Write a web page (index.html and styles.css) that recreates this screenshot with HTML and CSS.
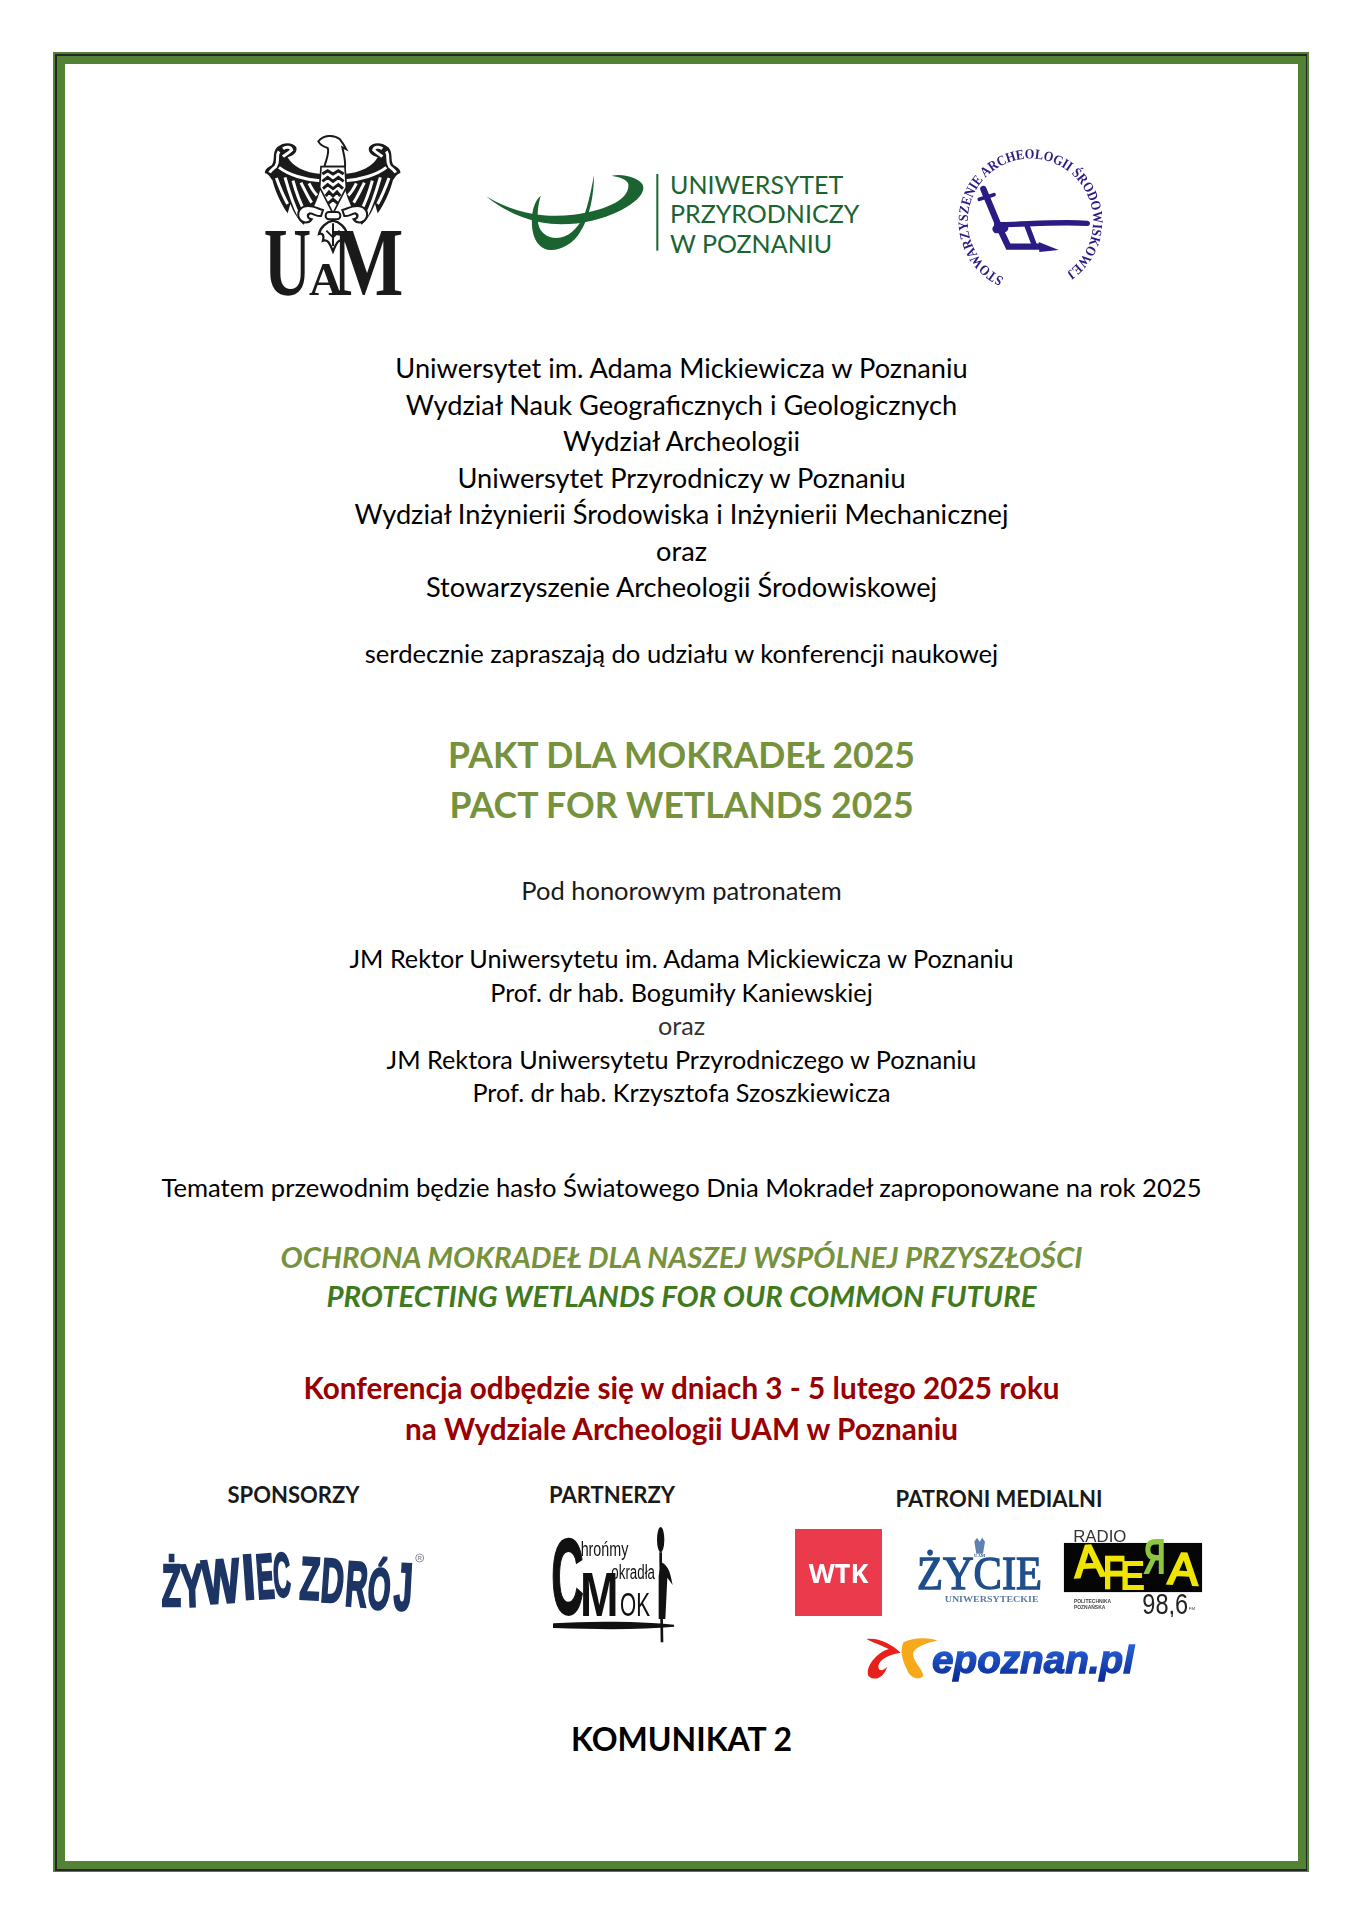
FILE: index.html
```html
<!DOCTYPE html>
<html lang="pl">
<head>
<meta charset="utf-8">
<title>Pakt dla mokradeł 2025</title>
<link rel="stylesheet" href="styles.css">
</head>
<body>
<div class="frame-outer"><div class="frame-mid"><main class="sheet">

<header class="logos">
  <svg class="logo-uam" viewBox="0 0 480 540" aria-label="UAM">
    <g id="wing">
      <path d="M198 150C150 148 110 125 98 100C115 95 128 85 124 70C112 52 82 55 66 70C50 88 62 108 50 124C38 130 28 138 30 148C42 150 44 160 52 168C60 200 78 240 98 268L106 240C118 270 132 290 146 302C168 270 186 235 198 190Z" fill="#1a1a1a"/>
      <g fill="none" stroke="#fff" stroke-width="9">
        <path d="M72 82C62 96 74 110 62 128C52 136 46 142 44 146"/>
        <path d="M84 74C95 66 108 70 110 78C100 88 90 92 84 98"/>
        <path d="M72 130C100 152 150 168 196 170"/>
        <path d="M64 162C76 195 88 222 98 240"/>
        <path d="M90 160C100 195 114 240 132 276"/>
        <path d="M114 170C122 200 134 235 150 264"/>
        <path d="M138 176C148 196 158 218 170 236"/>
        <path d="M162 178C168 190 174 202 186 214"/>
      </g>
      <path d="M160 246C138 246 124 262 132 282C142 300 162 298 170 286C158 284 154 272 164 268C178 270 186 278 198 276L204 258C190 254 176 246 160 246Z" fill="#fff" stroke="#1a1a1a" stroke-width="6"/>
    </g>
    <use href="#wing" transform="translate(466,0) scale(-1,1)"/>
    <path d="M190 52C205 34 235 30 255 46C264 58 270 68 274 76L262 70C266 90 272 106 270 128L208 128C214 106 224 86 218 72C205 68 195 62 190 52Z" fill="#fff" stroke="#1a1a1a" stroke-width="6"/>
    <path d="M198 128H270L274 190L234 268L194 190Z" fill="#fff" stroke="#1a1a1a" stroke-width="5"/>
    <path d="M202 150L218 140L234 150L250 140L266 150M202 172L218 160L234 172L250 160L266 172M204 194L218 182L234 194L250 182L264 194M212 216L222 204L234 216L246 204L256 216M220 238L234 226L248 238" fill="none" stroke="#1a1a1a" stroke-width="9"/>
    <rect x="212" y="264" width="44" height="22" rx="10" fill="#fff" stroke="#1a1a1a" stroke-width="6"/>
    <path d="M234 290C214 294 196 310 192 330C204 326 208 336 204 350C216 346 222 352 234 382C246 352 252 346 264 350C260 336 264 326 276 330C272 310 254 294 234 290Z" fill="#fff" stroke="#1a1a1a" stroke-width="7"/>
    <path d="M234 298V366M214 320L234 340L254 320" fill="none" stroke="#1a1a1a" stroke-width="6"/>
    <text class="uam-big" transform="translate(26,513) scale(.68,1)">U</text>
    <text class="uam-small" transform="translate(162,513)">A</text>
    <text class="uam-big" transform="translate(232,513) scale(.78,1)">M</text>
  </svg>

  <div class="uwp">
    <svg class="logo-uwp" viewBox="0 0 570 300" aria-hidden="true">
      <path d="M18 97C90 140 180 165 280 152C370 140 450 110 445 60C440 45 420 40 395 35C430 28 470 40 487 60C500 85 470 115 420 140C350 175 260 190 180 175C110 160 60 130 18 97Z" fill="#1b6431"/>
      <path d="M342 33C342 90 330 160 300 205C280 240 240 260 210 258C170 255 150 210 157 150C160 125 170 105 182 95C175 120 170 150 175 180C180 205 200 222 230 222C265 222 290 195 310 160C325 125 335 70 342 33Z" fill="#1b6431"/>
      <rect x="529" y="30" width="6" height="230" fill="#1b6431"/>
    </svg>
    <div class="uwp-name">UNIWERSYTET<br>PRZYRODNICZY<br>W POZNANIU</div>
  </div>

  <svg class="logo-sas" viewBox="0 0 510 495" aria-label="Stowarzyszenie Archeologii Środowiskowej">
    <defs><path id="sas-arc" d="M192 432A188 188 0 1 1 366 424"/></defs>
    <text class="sas-text"><textPath href="#sas-arc" textLength="985" lengthAdjust="spacingAndGlyphs">STOWARZYSZENIE ARCHEOLOGII ŚRODOWISKOWEJ</textPath></text>
    <g fill="none" stroke="#2a1c84" stroke-linecap="round">
      <path d="M130 165L180 285L205 338H300" stroke-width="19"/>
      <path d="M118 196L162 182" stroke-width="11"/>
      <path d="M170 272C250 272 350 262 442 268" stroke-width="16"/>
      <path d="M262 278L284 336" stroke-width="16"/>
      <path d="M170 285L192 282" stroke-width="26"/>
    </g>
    <path d="M296 324L356 348L298 354Z" fill="#2a1c84"/>
  </svg>
</header>

<section class="org">
  <p>Uniwersytet im. Adama Mickiewicza w Poznaniu</p>
  <p>Wydział Nauk Geograficznych i Geologicznych</p>
  <p>Wydział Archeologii</p>
  <p>Uniwersytet Przyrodniczy w Poznaniu</p>
  <p>Wydział Inżynierii Środowiska i Inżynierii Mechanicznej</p>
  <p>oraz</p>
  <p>Stowarzyszenie Archeologii Środowiskowej</p>
</section>

<p class="invite">serdecznie zapraszają do udziału w konferencji naukowej</p>

<h1 class="title">PAKT DLA MOKRADEŁ 2025<br>PACT FOR WETLANDS 2025</h1>

<p class="under">Pod honorowym patronatem</p>

<section class="patrons">
  <p>JM Rektor Uniwersytetu im. Adama Mickiewicza w Poznaniu</p>
  <p>Prof. dr hab. Bogumiły Kaniewskiej</p>
  <p class="patrons-and">oraz</p>
  <p>JM Rektora Uniwersytetu Przyrodniczego w Poznaniu</p>
  <p>Prof. dr hab. Krzysztofa Szoszkiewicza</p>
</section>

<p class="theme-intro">Tematem przewodnim będzie hasło Światowego Dnia Mokradeł zaproponowane na rok 2025</p>

<section class="theme">
  <p class="theme-pl">OCHRONA MOKRADEŁ DLA NASZEJ WSPÓLNEJ PRZYSZŁOŚCI</p>
  <p class="theme-en">PROTECTING WETLANDS FOR OUR COMMON FUTURE</p>
</section>

<p class="dates">Konferencja odbędzie się w dniach 3 - 5 lutego 2025 roku<br>na Wydziale Archeologii UAM w Poznaniu</p>

<section class="supporters">
  <div class="col">
    <h2 class="col-head">SPONSORZY</h2>
    <svg class="logo-zywiec" viewBox="0 0 870 240" aria-label="Żywiec Zdrój">
      <g class="zywiec-text">
        <text transform="translate(38,186) scale(.5,.95)">Ż</text>
        <text transform="translate(96,188) rotate(-2) scale(.55,.95)">Y</text>
        <text transform="translate(164,180) rotate(-4) scale(.63,.98)">W</text>
        <text transform="translate(284,166) rotate(-4) scale(.72,1)">I</text>
        <text transform="translate(326,164) rotate(-4) scale(.42,1)">E</text>
        <text transform="translate(376,158) rotate(-3) scale(.38,.98)">C</text>
        <text transform="translate(450,164) rotate(3) scale(.52,.95)">Z</text>
        <text transform="translate(512,172) rotate(4) scale(.5,.98)">D</text>
        <text transform="translate(586,184) rotate(4) scale(.48,1)">R</text>
        <text transform="translate(652,192) rotate(5) scale(.46,.92)">Ó</text>
        <text transform="translate(732,196) rotate(3) scale(.52,1.05)">J</text>
      </g>
      <circle cx="812" cy="42" r="12" fill="none" stroke="#8b8f97" stroke-width="3"/>
      <text class="zywiec-r" x="812" y="49" text-anchor="middle">R</text>
    </svg>
  </div>
  <div class="col">
    <h2 class="col-head">PARTNERZY</h2>
    <svg class="logo-mok" viewBox="0 0 435 390" aria-label="Chrońmy Mokradła MOK">
      <text class="mok-c" transform="translate(34,285) scale(.42,1)">C</text>
      <text class="mok-m" transform="translate(120,290) scale(.73,1)">M</text>
      <text class="mok-ok" x="240" y="290" textLength="90" lengthAdjust="spacingAndGlyphs">OK</text>
      <text class="mok-small" x="122" y="112" textLength="143" lengthAdjust="spacingAndGlyphs">hrońmy</text>
      <text class="mok-small" x="214" y="180" textLength="131" lengthAdjust="spacingAndGlyphs">okradła</text>
      <ellipse cx="362" cy="62" rx="11" ry="38" fill="#111"/>
      <path d="M362 100V125L366 370" fill="none" stroke="#111" stroke-width="8"/>
      <path d="M364 130C388 140 392 170 398 198L382 176L376 300H356V170Z" fill="#111"/>
      <path d="M42 316C150 308 300 310 402 320C300 330 150 328 42 324Z" fill="#111" stroke="#111" stroke-width="6"/>
    </svg>
  </div>
  <div class="col col-media">
    <h2 class="col-head">PATRONI MEDIALNI</h2>
    <div class="media-row">
      <div class="logo-wtk">WTK</div>
      <svg class="logo-zycie" viewBox="0 0 375 200" aria-label="Życie Uniwersyteckie">
        <path d="M172 14L180 2L188 14L196 2L204 14L198 50H178Z" fill="#5f82b0"/>
        <text class="zycie-uam" x="188" y="60" text-anchor="middle">UAM</text>
        <text class="zycie-main" x="0" y="157" textLength="375" lengthAdjust="spacingAndGlyphs">ŻYCIE</text>
        <text class="zycie-sub" x="83" y="195" textLength="282" lengthAdjust="spacingAndGlyphs">UNIWERSYTECKIE</text>
      </svg>
      <svg class="logo-afera" viewBox="0 0 420 265" aria-label="Radio Afera 98,6 FM">
        <rect x="2" y="42" width="416" height="148" fill="#050505"/>
        <text class="afera-radio" x="30" y="40" textLength="160" lengthAdjust="spacingAndGlyphs">RADIO</text>
        <text class="afera-y" transform="translate(36,146) rotate(-4)">A</text>
        <text class="afera-y" transform="translate(120,178) scale(.8,1)">F</text>
        <text class="afera-y" transform="translate(172,180) scale(.8,.85)">E</text>
        <text class="afera-g" transform="translate(242,132) scale(.85,1.08)">Я</text>
        <text class="afera-y" transform="translate(314,164) rotate(3)">A</text>
        <text class="afera-small" x="32" y="222">POLITECHNIKA</text>
        <text class="afera-small" x="32" y="241">POZNAŃSKA</text>
        <text class="afera-freq" x="238" y="256" textLength="138" lengthAdjust="spacingAndGlyphs">98,6</text>
        <text class="afera-fm" x="378" y="244">FM</text>
      </svg>
    </div>
    <svg class="logo-epoznan" viewBox="0 0 855 210" aria-label="epoznan.pl">
      <defs>
        <linearGradient id="ep-blue" x1="0" y1="0" x2="0" y2="1">
          <stop offset="0" stop-color="#2f6fe6"/><stop offset="1" stop-color="#0a2a96"/>
        </linearGradient>
      </defs>
      <path d="M20 45C60 40 100 65 122 86C90 90 60 105 55 125C55 145 70 140 82 128C70 165 40 172 25 155C15 130 50 85 86 75C60 62 35 55 20 45Z" fill="#e8201c"/>
      <path d="M130 55C160 40 205 40 232 50C205 55 170 65 160 85C155 110 185 130 190 155C180 170 150 165 140 135C125 105 120 80 130 55Z" fill="#f7a81b"/>
      <text class="epoznan-text" x="216" y="146" textLength="606" lengthAdjust="spacingAndGlyphs" fill="url(#ep-blue)" stroke="url(#ep-blue)" stroke-width="4">epoznan.pl</text>
    </svg>
  </div>
</section>

<p class="notice">KOMUNIKAT 2</p>

</main></div></div>
</body>
</html>
```
FILE: styles.css
```css
html, body { margin: 0; padding: 0; background: #fff; }
body { padding: 52px 0 51px 53px; font-family: Lato, "Liberation Sans", sans-serif; color: #000; }
p, h1, h2 { margin: 0; font-weight: 400; }

.frame-outer { width: 1256px; box-sizing: border-box; background: #548235; border: solid #548235; border-width: 2px 2px 1px 2px; }
.frame-mid { border: solid #262626; border-width: 2px 1px 2px 2px; }
.sheet { border: 8px solid #548235; background: #fff; box-sizing: border-box; height: 1813px; padding-top: 60px; text-align: center; }

.logos { display: flex; align-items: center; height: 180px; padding-left: 190px; }
.logo-uam { width: 160px; height: 180px; flex: none; filter: blur(.3px); }
.uwp { display: flex; align-items: center; margin-left: 65px; flex: none; width: 460px; }
.logo-uwp { width: 190px; height: 100px; flex: none; }
.uwp-name { font-size: 25px; line-height: 29.5px; color: #1b6431; text-align: left; }
.logo-sas { width: 170px; height: 165px; margin-top: 5px; flex: none; filter: blur(.6px); }

.uam-big { font: 700 290px "Liberation Serif", serif; fill: #1a1a1a; }
.uam-small { font: 700 140px "Liberation Serif", serif; fill: #1a1a1a; }
.sas-text { font: 700 42px "Liberation Serif", serif; fill: #2a1c84; }

.org { margin-top: 46px; font-size: 27.2px; line-height: 36.5px; }
.invite { margin-top: 32.5px; font-size: 25.6px; line-height: 30px; }
.title { margin-top: 62px; font-size: 35.6px; line-height: 50px; font-weight: 700; color: #76923c; }
.under { margin-top: 45px; font-size: 25.5px; line-height: 30px; color: #1a1a1a; }
.patrons { margin-top: 37px; font-size: 25.2px; line-height: 33.6px; }
.patrons-and { color: #333; }
.theme-intro { margin-top: 62px; font-size: 25.6px; line-height: 30px; }
.theme { margin-top: 35px; font-size: 29.4px; line-height: 39px; font-weight: 700; font-style: italic; }
.theme-pl { font-weight: 700; color: #76923c; }
.theme-en { font-weight: 700; color: #3f7a1f; }
.dates { margin-top: 52px; font-size: 29.7px; line-height: 41px; font-weight: 700; color: #990000; }

.supporters { display: grid; grid-template-columns: 457px 180px 594px; margin-top: 34px; }
.col { display: flex; flex-direction: column; align-items: center; }
.col-head { font-size: 22px; line-height: 24px; font-weight: 700; color: #1a1a1a; white-space: nowrap; }
.col-media { padding-top: 4px; }
.media-row { display: flex; align-items: flex-start; margin-top: 18px; }

.logo-zywiec { width: 290px; height: 80px; margin-top: 37px; filter: blur(.5px); }
.zywiec-text text { font: 700 190px "Liberation Sans", sans-serif; fill: #1c3564; stroke: #1c3564; stroke-width: 8px; }
.zywiec-r { font: 700 18px "Liberation Sans", sans-serif; fill: #8b8f97; }

.logo-mok { width: 145px; height: 130px; margin-top: 12px; filter: blur(.5px); }
.mok-c { font: 700 320px "Liberation Sans", sans-serif; fill: #111; stroke: #111; stroke-width: 6px; }
.mok-m { font: 700 190px "Liberation Sans", sans-serif; fill: #111; }
.mok-ok { font: 400 100px "Liberation Sans", sans-serif; fill: #111; }
.mok-small { font: 400 60px "Liberation Sans", sans-serif; fill: #111; }

.logo-wtk { width: 87px; height: 87px; background: #ea3a4b; color: #fff; font: 700 27px/87px "Open Sans", sans-serif; text-align: center; flex: none; filter: blur(.4px); }
.logo-zycie { width: 125px; height: 67px; margin: 8px 0 0 35px; flex: none; filter: blur(.4px); }
.zycie-main { font: 400 140px "Liberation Serif", serif; fill: #1f4e8c; stroke: #1f4e8c; stroke-width: 4px; }
.zycie-sub { font: 700 26px "Liberation Serif", serif; fill: #5b7aa5; }
.zycie-uam { font: 700 14px "Liberation Serif", serif; fill: #1f4e8c; }
.logo-afera { width: 140px; height: 88px; margin-left: 21px; flex: none; filter: blur(.4px); }
.afera-radio { font: 400 52px "Liberation Sans", sans-serif; fill: #333; }
.afera-y { font: 400 135px "Liberation Sans", sans-serif; fill: #f0e500; stroke: #f0e500; stroke-width: 7px; }
.afera-g { font: 400 125px "Noto Sans", "DejaVu Sans", sans-serif; fill: #8dc63f; stroke: #8dc63f; stroke-width: 6px; }
.afera-small { font: 700 15px "Liberation Sans", sans-serif; fill: #444; }
.afera-freq { font: 400 88px "Liberation Sans", sans-serif; fill: #222; }
.afera-fm { font: 400 13px "Liberation Sans", sans-serif; fill: #444; }

.logo-epoznan { width: 285px; height: 70px; margin-top: 7px; margin-left: 6px; filter: blur(.4px); }
.epoznan-text { font: italic 700 118px "Liberation Sans", sans-serif; }

.notice { margin-top: 27px; font-size: 32px; line-height: 36px; font-weight: 700; }
```
